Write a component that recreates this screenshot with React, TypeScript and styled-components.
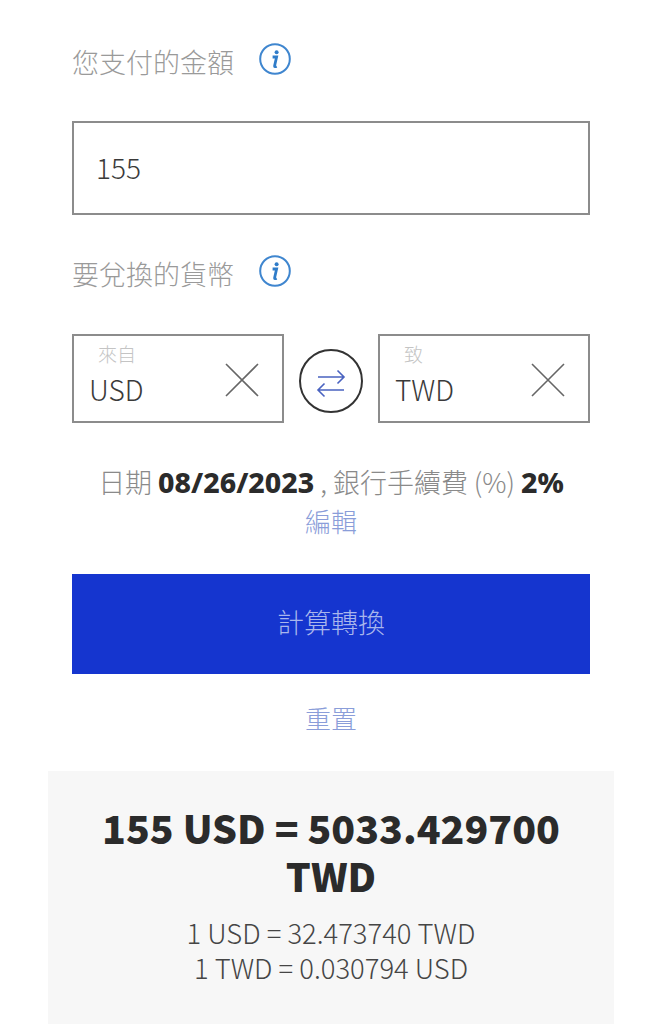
import React from "react"
import styled, { createGlobalStyle } from 'styled-components'

const GlobalStyle = createGlobalStyle`
html, body {
  margin: 0;
  padding: 0;
  background: #fff;
  overflow: hidden;
}
body {
  font-family: "Noto Sans CJK TC", sans-serif;
  font-weight: 300;
  color: #333;
}
`

const Page = styled.div`
  width: 662px;
  height: 1024px;
  overflow: hidden;
  display: flex;
  flex-direction: column;
  align-items: center;
`

const Form = styled.div`
  width: 518px;
  display: flex;
  flex-direction: column;
`

const LabelRow = styled.div<{ $top: number; $bottom: number }>`
  display: flex;
  align-items: center;
  gap: 25px;
  height: 40px;
  margin-top: ${p => p.$top}px;
  margin-bottom: ${p => p.$bottom}px;
`

const Label = styled.span`
  font-weight: 300;
  font-size: 27px;
  color: #9a9a9a;
  line-height: 40px;
`

const InfoIcon = styled.svg`
  width: 32px;
  height: 32px;
  margin-top: -6px;
`

const AmountBox = styled.div`
  box-sizing: border-box;
  height: 94px;
  border: 2px solid #8c8c8c;
  display: flex;
  align-items: center;
  padding: 0 0 2px 22px;
  font-size: 28px;
  color: #3a3a3a;
`

const CurrencyRow = styled.div`
  display: flex;
  align-items: center;
  justify-content: space-between;
`

const CurrencyBox = styled.div`
  box-sizing: border-box;
  width: 212px;
  height: 89px;
  border: 2px solid #8c8c8c;
  display: flex;
  align-items: center;
  justify-content: space-between;
  padding: 0 22px 0 15px;
`

const CurrencyText = styled.div<{ $indent: number }>`
  display: flex;
  flex-direction: column;
  align-self: flex-start;
  padding-top: 6px;
  small {
    font-size: 19px;
    line-height: 24px;
    color: #c4c4c4;
    font-weight: 300;
    margin-left: ${p => p.$indent}px;
  }
  span {
    font-size: 28px;
    line-height: 36px;
    margin-top: 5px;
    color: #3a3a3a;
  }
`

const ClearIcon = styled.svg`
  width: 36px;
  height: 36px;
  margin-top: 3px;
`

const SwapButton = styled.div`
  box-sizing: border-box;
  width: 64px;
  height: 64px;
  margin-top: 5px;
  border-radius: 50%;
  border: 2px solid #333;
  display: flex;
  align-items: center;
  justify-content: center;
`

const Terms = styled.div`
  margin-top: 40px;
  text-align: center;
  font-size: 27px;
  line-height: 38px;
  color: #8a8a8a;
  font-weight: 300;
  white-space: nowrap;
  b {
    font-family: "Noto Sans", sans-serif;
    font-size: 28.5px;
    font-weight: 800;
    color: #2b2b2b;
  }
`

const TextLink = styled.div`
  text-align: center;
  font-weight: 300;
  font-size: 26px;
  line-height: 39px;
  color: #8a9dd9;
`

const CalcButton = styled.div`
  box-sizing: border-box;
  height: 100px;
  margin-top: 34px;
  margin-bottom: 24px;
  padding-bottom: 6px;
  background: #1535cf;
  color: #a9b6ec;
  display: flex;
  align-items: center;
  justify-content: center;
  font-weight: 300;
  font-size: 27px;
`

const Result = styled.div`
  box-sizing: border-box;
  width: 566px;
  flex: 1;
  margin-top: 34px;
  background: #f7f7f7;
  padding: 32px 40px 0;
  text-align: center;
`

const Total = styled.div`
  font-weight: 900;
  font-size: 39.2px;
  line-height: 48px;
  color: #2b2b2b;
`

const Rates = styled.div`
  margin-top: 16px;
  font-size: 27.4px;
  line-height: 35px;
  color: #454545;
`

const Info = () => (
  <InfoIcon viewBox="0 0 32 32">
    <circle cx="16" cy="16" r="14.8" fill="none" stroke="#3f86cf" strokeWidth="2" />
    <circle cx="17.6" cy="9.2" r="2" fill="#2f7cc9" />
    <path d="M13.6 14h4l-2 8.8c-.2.9.5 1.2 2 .4" fill="none" stroke="#2f7cc9" strokeWidth="2.8" />
  </InfoIcon>
)

const Clear = () => (
  <ClearIcon viewBox="0 0 36 36">
    <path d="M2 2l32 32M34 2L2 34" stroke="#666" strokeWidth="1.6" fill="none" />
  </ClearIcon>
)

const App = (): JSX.Element => (
  <Page>
    <GlobalStyle />
    <Form>
      <LabelRow $top={42} $bottom={39}>
        <Label>您支付的金額</Label>
        <Info />
      </LabelRow>
      <AmountBox>155</AmountBox>
      <LabelRow $top={39} $bottom={40}>
        <Label>要兌換的貨幣</Label>
        <Info />
      </LabelRow>
      <CurrencyRow>
        <CurrencyBox>
          <CurrencyText $indent={9}>
            <small>來自</small>
            <span>USD</span>
          </CurrencyText>
          <Clear />
        </CurrencyBox>
        <SwapButton>
          <svg width="30" height="34" viewBox="0 0 30 34" fill="none" stroke="#4a63c0" strokeWidth="1.6">
            <path d="M2 13h26M21.5 6.5l6.5 6.5-6.5 6.5M28 26H2M8.5 19.500L2 26l6.5 6.500" />
          </svg>
        </SwapButton>
        <CurrencyBox>
          <CurrencyText $indent={9}>
            <small>致</small>
            <span>TWD</span>
          </CurrencyText>
          <Clear />
        </CurrencyBox>
      </CurrencyRow>
      <Terms>
        日期 <b>08/26/2023</b> , 銀行手續費 (%) <b>2%</b>
      </Terms>
      <TextLink>編輯</TextLink>
      <CalcButton>計算轉換</CalcButton>
      <TextLink>重置</TextLink>
    </Form>
    <Result>
      <Total>155 USD = 5033.429700 TWD</Total>
      <Rates>
        1 USD = 32.473740 TWD
        <br />
        1 TWD = 0.030794 USD
      </Rates>
    </Result>
  </Page>
)

export default App
